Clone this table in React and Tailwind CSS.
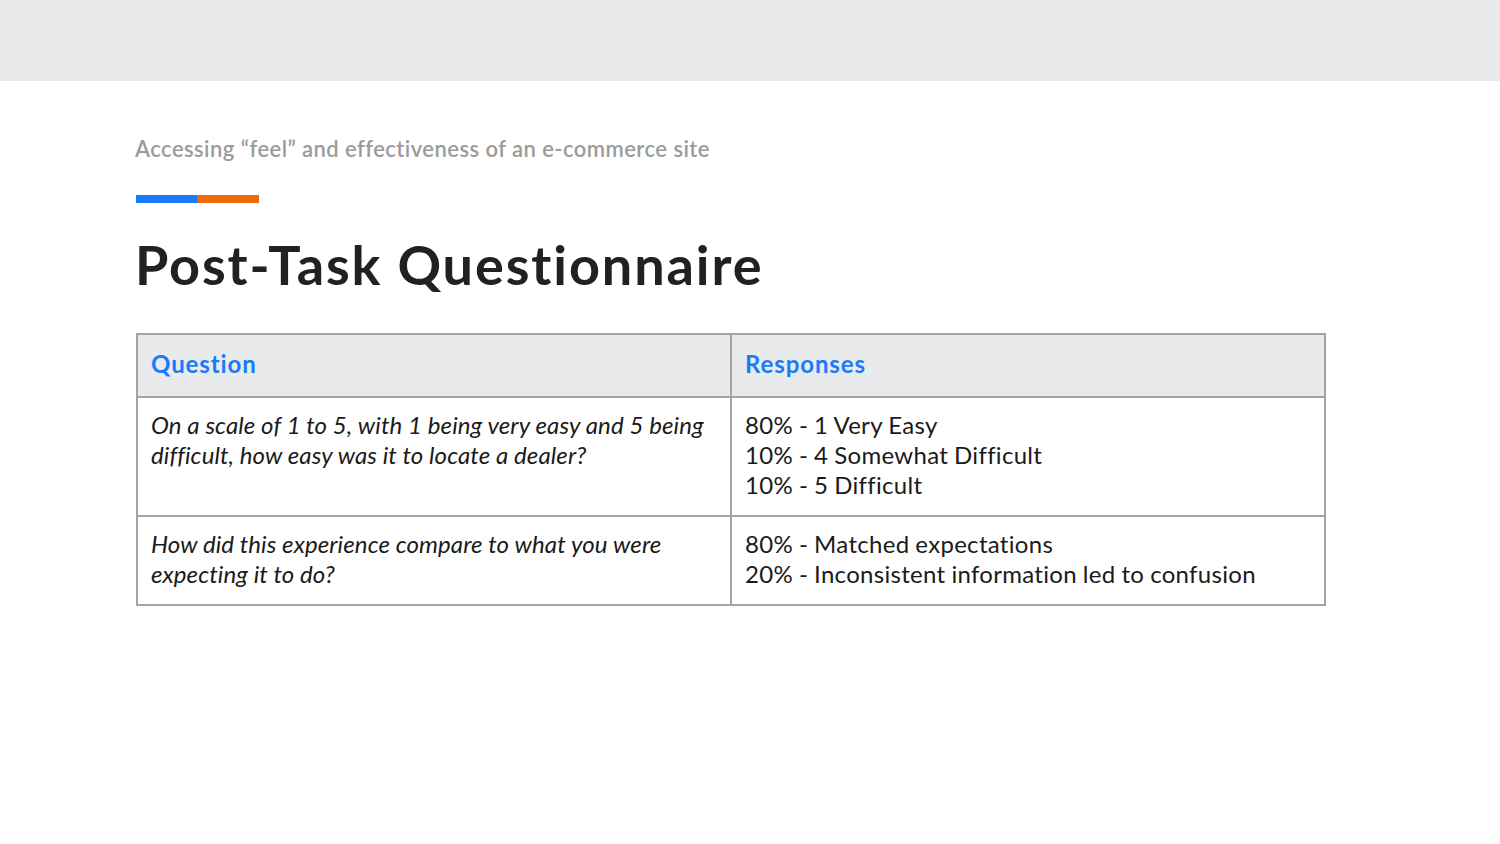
const rows = [
  {
    q: 'On a scale of 1 to 5, with 1 being very easy and 5 being difficult, how easy was it to locate a dealer?',
    r: ['80% - 1 Very Easy', '10% - 4 Somewhat Difficult', '10% - 5 Difficult'],
  },
  {
    q: 'How did this experience compare to what you were expecting it to do?',
    r: ['80% - Matched expectations', '20% - Inconsistent information led to confusion'],
  },
];

export default function App() {
  return (
    <div className="w-[1500px] h-[844px] bg-white font-['Lato',sans-serif] overflow-hidden">
      <div className="h-[81px] bg-[#e8eaeb]" />
      <div className="pl-[135px]">
        <p className="mt-[53px] text-[22px] leading-[30px] font-semibold text-[#9b9b9b] tracking-[0.45px]">
          Accessing “feel” and effectiveness of an e-commerce site
        </p>
        <div className="mt-[31px] ml-px flex h-[8px]">
          <div className="w-[61px] bg-[#1a7af8]" />
          <div className="w-[62px] bg-[#ec6a0c]" />
        </div>
        <h1 className="mt-[30px] text-[54px] leading-[64px] font-bold text-[#212121] tracking-[1.9px]">
          Post-Task Questionnaire
        </h1>
        <table className="mt-[36px] ml-px w-[1190px] border-collapse border-2 border-[#a3a3a3] text-[24px] leading-[30px] text-[#1a1a1a] table-fixed">
          <thead>
            <tr className="bg-[#e8eaeb] h-[63px]">
              <th className="w-[594px] border-2 border-[#a3a3a3] px-[13px] pb-[3px] text-left font-bold text-[#1a7af8] tracking-[0.9px]">Question</th>
              <th className="border-2 border-[#a3a3a3] px-[13px] pb-[3px] text-left font-bold text-[#1a7af8] tracking-[0.9px]">Responses</th>
            </tr>
          </thead>
          <tbody>
            {rows.map((row, i) => (
              <tr key={i}>
                <td className="border-2 border-[#a3a3a3] px-[13px] pt-[12px] pb-[15px] align-top italic tracking-[0.1px]">{row.q}</td>
                <td className="border-2 border-[#a3a3a3] px-[13px] pt-[12px] pb-[15px] align-top tracking-[0.3px] [word-spacing:-0.5px]">
                  {row.r.map((line) => (
                    <div key={line}>{line}</div>
                  ))}
                </td>
              </tr>
            ))}
          </tbody>
        </table>
      </div>
    </div>
  );
}
